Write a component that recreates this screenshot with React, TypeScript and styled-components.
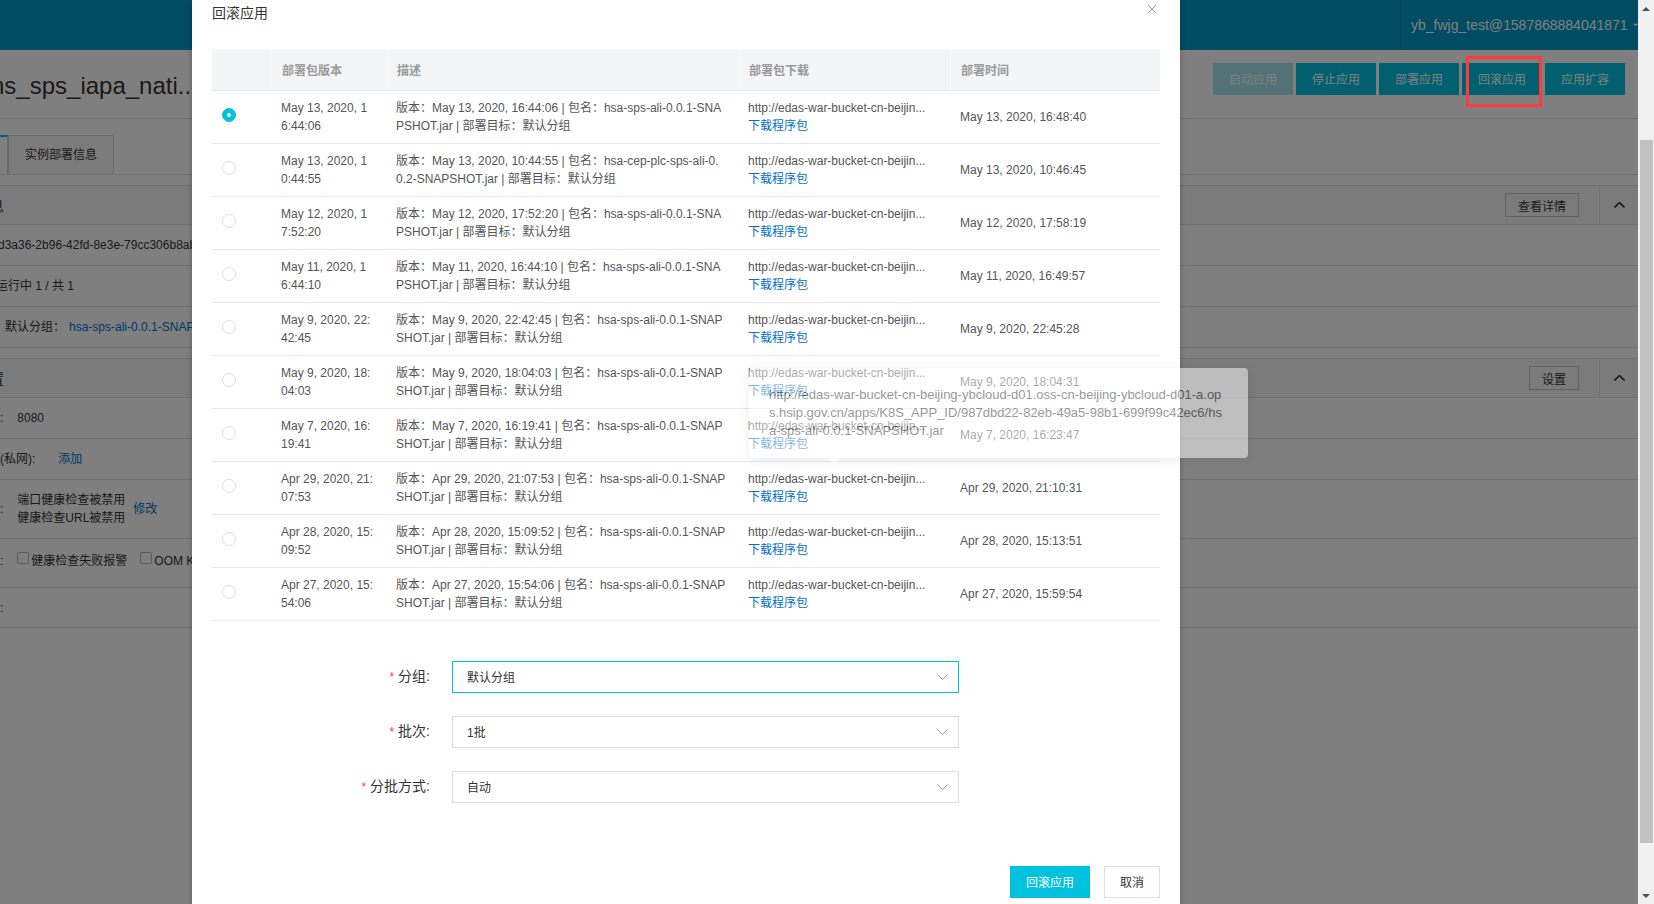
import styled, { createGlobalStyle } from 'styled-components';

const GlobalStyle = createGlobalStyle`
  * {
    box-sizing: border-box;
  }
  html,
  body {
    margin: 0;
    padding: 0;
  }
  body {
    font-family: 'Liberation Sans', Arial, 'Noto Sans CJK SC', sans-serif;
    font-size: 12px;
    color: #333;
    overflow: hidden;
  }
`;

const Screen = styled.div`
  display: flex;
  width: 1654px;
  height: 904px;
  overflow: hidden;
`;

const Viewport = styled.div`
  position: relative;
  flex: 1;
  height: 100%;
  overflow: hidden;
  background: #fff;
`;

/* ---------- page behind the dialog ---------- */

const TopBar = styled.header`
  height: 50px;
  background: #0098c6;
  display: flex;
  justify-content: flex-end;
`;

const Account = styled.div`
  width: 238px;
  border-left: 1px solid rgba(0, 0, 0, 0.14);
  display: flex;
  align-items: center;
  gap: 5px;
  padding-left: 10px;
  color: #fff;
  font-size: 14px;
  white-space: nowrap;
`;

const TitleBar = styled.div`
  height: 69px;
  display: flex;
  justify-content: space-between;
  align-items: flex-start;
  padding: 13px 13px 0 0;
  border-bottom: 1px solid #dedede;
`;

const AppName = styled.h1`
  margin: 9px 0 0 -9px;
  font-size: 24px;
  line-height: 28px;
  font-weight: normal;
  color: #333;
  white-space: nowrap;
`;

const ActionGroup = styled.div`
  display: flex;
  gap: 3px;
`;

const ActionButton = styled.button<{ $disabled?: boolean }>`
  width: 80px;
  height: 32px;
  border: none;
  padding: 0 0 2px;
  font: inherit;
  font-size: 12px;
  color: #fff;
  background: ${(p) => (p.$disabled ? '#a6e4ee' : '#00c1de')};
`;

const TabBar = styled.div`
  height: 56px;
  padding-top: 16px;
  display: flex;
  align-items: flex-end;
  border-bottom: 1px solid #dedede;
`;

const Tab = styled.div<{ $active?: boolean }>`
  height: 39px;
  line-height: 39px;
  text-align: center;
  font-size: 12px;
  color: #333;
  width: ${(p) => (p.$active ? '100px' : '106px')};
  margin-left: ${(p) => (p.$active ? '-92px' : '0')};
  background: ${(p) => (p.$active ? '#fff' : '#f6f6f6')};
  border: 1px solid #d6d6d6;
  border-bottom: none;
  border-top: ${(p) => (p.$active ? '2px solid #00c1de' : '1px solid #d6d6d6')};
`;

const Panel = styled.section`
  margin-top: 10px;
  border-top: 1px solid #e2e2e2;
`;

const PanelHead = styled.div`
  height: 39px;
  display: flex;
  align-items: center;
  background: #f6f6f6;
  border-bottom: 1px solid #e2e2e2;
`;

const PanelTitle = styled.span`
  margin-left: -10px;
  font-size: 14px;
  flex: 1;
  white-space: nowrap;
`;

const GhostButton = styled.button`
  height: 24px;
  padding: 0 12px;
  margin-right: 20px;
  border: 1px solid #c4c4c4;
  background: transparent;
  font: inherit;
  font-size: 12px;
  color: #333;
`;

const FoldCell = styled.div`
  width: 39px;
  height: 100%;
  display: flex;
  align-items: center;
  justify-content: center;
  border-left: 1px solid #e2e2e2;
`;

const PanelRow = styled.div<{ $h?: number; $lift?: number }>`
  height: ${(p) => p.$h ?? 41}px;
  padding-bottom: ${(p) => p.$lift ?? 0}px;
  display: flex;
  align-items: center;
  border-bottom: 1px solid #e2e2e2;
  line-height: 18px;
  white-space: nowrap;
`;

const Value = styled.span<{ $ml?: number }>`
  margin-left: ${(p) => p.$ml ?? 0}px;
  color: #333;
`;

const PageLink = styled.a<{ $ml?: number }>`
  margin-left: ${(p) => p.$ml ?? 0}px;
  color: #0070cc;
  text-decoration: none;
`;

const Stack = styled.div<{ $ml?: number }>`
  margin-left: ${(p) => p.$ml ?? 0}px;
  display: flex;
  flex-direction: column;
`;

const Checkbox = styled.span<{ $ml?: number }>`
  width: 12px;
  height: 12px;
  margin: -7px 0 0 ${(p) => p.$ml ?? 0}px;
  border: 1px solid #b8b8b8;
  border-radius: 2px;
  background: #fff;
`;

const Mask = styled.div`
  position: absolute;
  inset: 0;
  background: rgba(0, 0, 0, 0.5);
`;

const Highlight = styled.div`
  position: absolute;
  left: 1466px;
  top: 56px;
  width: 76px;
  height: 51px;
  border: 3px solid #ff3a3a;
`;

/* ---------- rollback dialog ---------- */

const Dialog = styled.div`
  position: absolute;
  left: 192px;
  top: 0;
  width: 988px;
  height: 930px;
  background: #fff;
  box-shadow: 0 0 6px rgba(0, 0, 0, 0.25);
`;

const DialogHead = styled.div`
  height: 49px;
  display: flex;
  justify-content: space-between;
  align-items: flex-start;
  padding: 3px 23px 0 20px;
`;

const DialogTitle = styled.h2`
  margin: 0;
  font-size: 14px;
  line-height: 20px;
  font-weight: normal;
  color: #333;
`;

const CloseButton = styled.button`
  border: none;
  background: none;
  padding: 0;
  margin-top: 1px;
  display: flex;
`;

const DialogBody = styled.div`
  padding: 0 20px;
`;

const Table = styled.table`
  width: 948px;
  table-layout: fixed;
  border-collapse: separate;
  border-spacing: 0;
  font-size: 12px;
  color: #555;
`;

const Th = styled.th`
  padding: 3px 10px 0;
  line-height: 38px;
  text-align: left;
  font-weight: bold;
  color: #999;
  background: #f4f5f7;
  border-bottom: 1px solid #e6e7eb;
  white-space: nowrap;

  & + & {
    border-left: 1px solid #fbfbfc;
  }
`;

const Td = styled.td`
  padding: 8px 10px;
  line-height: 18px;
  vertical-align: middle;
  border-bottom: 1px solid #e8e9ed;
  white-space: nowrap;
  overflow: hidden;
`;

const Line = styled.span`
  display: block;
`;

const Radio = styled.span<{ $checked?: boolean }>`
  position: relative;
  display: block;
  width: 14px;
  height: 14px;
  margin-top: -4px;
  border-radius: 50%;
  border: 1px solid ${(p) => (p.$checked ? '#00c1de' : '#dcdee3')};
  background: ${(p) => (p.$checked ? '#00c1de' : '#fff')};

  &::after {
    content: '';
    display: ${(p) => (p.$checked ? 'block' : 'none')};
    position: absolute;
    left: 4px;
    top: 4px;
    width: 4px;
    height: 4px;
    border-radius: 50%;
    background: #fff;
  }
`;

const Form = styled.div`
  margin-top: 40px;
  display: flex;
  flex-direction: column;
  gap: 23px;
`;

const Field = styled.div`
  display: grid;
  grid-template-columns: 218px 507px;
  column-gap: 22px;
  align-items: center;
`;

const FieldLabel = styled.label`
  text-align: right;
  font-size: 14px;
  line-height: 18px;
  padding-bottom: 1px;
  color: #333;
  white-space: nowrap;
`;

const Required = styled.span`
  margin-right: 4px;
  font-size: 12px;
  color: #f54743;
`;

const Select = styled.div<{ $focused?: boolean }>`
  height: 32px;
  display: flex;
  align-items: center;
  justify-content: space-between;
  padding: 0 10px 1px 14px;
  border: 1px solid ${(p) => (p.$focused ? '#00c1de' : '#dcdee3')};
  font-size: 12px;
  color: #333;
`;

const Footer = styled.div`
  margin-top: 63px;
  display: flex;
  justify-content: flex-end;
  gap: 14px;
`;

const Button = styled.button<{ $primary?: boolean }>`
  height: 32px;
  width: ${(p) => (p.$primary ? '80px' : '56px')};
  padding: 0 0 1px;
  font: inherit;
  font-size: 12px;
  color: ${(p) => (p.$primary ? '#fff' : '#333')};
  background: ${(p) => (p.$primary ? '#00c1de' : '#fff')};
  border: 1px solid ${(p) => (p.$primary ? '#00c1de' : '#dcdee3')};
`;

const Tooltip = styled.div`
  position: absolute;
  left: 749px;
  top: 368px;
  width: 499px;
  padding: 18px 20px;
  background: #fff;
  color: #333;
  font-size: 13px;
  line-height: 18px;
  white-space: nowrap;
  border-radius: 4px;
  box-shadow: 0 2px 8px rgba(0, 0, 0, 0.15);
  opacity: 0.5;

  &::after {
    content: '';
    position: absolute;
    left: 82px;
    bottom: -4px;
    width: 8px;
    height: 8px;
    background: #fff;
    transform: rotate(45deg);
  }
`;

/* ---------- scrollbar ---------- */

const Scrollbar = styled.div`
  width: 16px;
  height: 100%;
  background: #f1f1f1;
  display: flex;
  flex-direction: column;
`;

const ScrollArrow = styled.div`
  height: 17px;
  display: flex;
  align-items: center;
  justify-content: center;
`;

const ScrollTrack = styled.div`
  flex: 1;
  padding-top: 123px;
`;

const ScrollThumb = styled.div`
  height: 703px;
  margin: 0 1px 0 2px;
  background: #c1c1c1;
`;

const Chevron = ({ up, color = '#999' }: { up?: boolean; color?: string }) => (
  <svg width="11" height="6" viewBox="0 0 11 6" fill="none">
    <polyline
      points={up ? '0.5,5.5 5.5,0.5 10.5,5.5' : '0.5,0.5 5.5,5.5 10.5,0.5'}
      stroke={color}
      strokeWidth={up ? 1.6 : 1}
    />
  </svg>
);

const Triangle = ({ down, color }: { down?: boolean; color: string }) => (
  <svg width="8" height="4" viewBox="0 0 8 4">
    <polygon points={down ? '0,0 8,0 4,4' : '0,4 8,4 4,0'} fill={color} />
  </svg>
);

type Version = {
  stamp: string;
  dateCut: number;
  pkg: string;
  pkgCut: number;
  time: string;
  checked?: boolean;
};

const SPS = 'hsa-sps-ali-0.0.1-SNAPSHOT.jar';

const versions: Version[] = [
  { stamp: 'May 13, 2020, 16:44:06', dateCut: 15, pkg: SPS, pkgCut: 21, time: 'May 13, 2020, 16:48:40', checked: true },
  { stamp: 'May 13, 2020, 10:44:55', dateCut: 15, pkg: 'hsa-cep-plc-sps-ali-0.0.2-SNAPSHOT.jar', pkgCut: 22, time: 'May 13, 2020, 10:46:45' },
  { stamp: 'May 12, 2020, 17:52:20', dateCut: 15, pkg: SPS, pkgCut: 21, time: 'May 12, 2020, 17:58:19' },
  { stamp: 'May 11, 2020, 16:44:10', dateCut: 15, pkg: SPS, pkgCut: 21, time: 'May 11, 2020, 16:49:57' },
  { stamp: 'May 9, 2020, 22:42:45', dateCut: 16, pkg: SPS, pkgCut: 22, time: 'May 9, 2020, 22:45:28' },
  { stamp: 'May 9, 2020, 18:04:03', dateCut: 16, pkg: SPS, pkgCut: 22, time: 'May 9, 2020, 18:04:31' },
  { stamp: 'May 7, 2020, 16:19:41', dateCut: 16, pkg: SPS, pkgCut: 22, time: 'May 7, 2020, 16:23:47' },
  { stamp: 'Apr 29, 2020, 21:07:53', dateCut: 17, pkg: SPS, pkgCut: 22, time: 'Apr 29, 2020, 21:10:31' },
  { stamp: 'Apr 28, 2020, 15:09:52', dateCut: 17, pkg: SPS, pkgCut: 22, time: 'Apr 28, 2020, 15:13:51' },
  { stamp: 'Apr 27, 2020, 15:54:06', dateCut: 17, pkg: SPS, pkgCut: 22, time: 'Apr 27, 2020, 15:59:54' },
];

const fields = [
  { label: '分组:', value: '默认分组', focused: true },
  { label: '批次:', value: '1批' },
  { label: '分批方式:', value: '自动' },
];

const App = () => {
  return (
    <>
      <GlobalStyle />
      <Screen>
        <Viewport>
          <TopBar>
            <Account>
              yb_fwjg_test@1587868884041871
              <Triangle down color="#fff" />
            </Account>
          </TopBar>

          <TitleBar>
            <AppName>ns_sps_iapa_nati...</AppName>
            <ActionGroup>
              <ActionButton $disabled>启动应用</ActionButton>
              <ActionButton>停止应用</ActionButton>
              <ActionButton>部署应用</ActionButton>
              <ActionButton>回滚应用</ActionButton>
              <ActionButton>应用扩容</ActionButton>
            </ActionGroup>
          </TitleBar>

          <TabBar>
            <Tab $active>基本信息</Tab>
            <Tab>实例部署信息</Tab>
          </TabBar>

          <Panel>
            <PanelHead>
              <PanelTitle>息</PanelTitle>
              <GhostButton>查看详情</GhostButton>
              <FoldCell>
                <Chevron up color="#333" />
              </FoldCell>
            </PanelHead>
            <PanelRow>
              <Value $ml={-2}>d3a36-2b96-42fd-8e3e-79cc306b8ab7</Value>
            </PanelRow>
            <PanelRow>
              <Value $ml={-4}>运行中 1 / 共 1</Value>
            </PanelRow>
            <PanelRow>
              <Value $ml={5}>默认分组：</Value>
              <PageLink $ml={4}>hsa-sps-ali-0.0.1-SNAPSHOT.jar</PageLink>
            </PanelRow>
          </Panel>

          <Panel>
            <PanelHead>
              <PanelTitle>置</PanelTitle>
              <GhostButton>设置</GhostButton>
              <FoldCell>
                <Chevron up color="#333" />
              </FoldCell>
            </PanelHead>
            <PanelRow>
              <Value>:</Value>
              <Value $ml={14}>8080</Value>
            </PanelRow>
            <PanelRow>
              <Value>(私网):</Value>
              <PageLink $ml={23}>添加</PageLink>
            </PanelRow>
            <PanelRow $h={59}>
              <Value>:</Value>
              <Stack $ml={14}>
                <span>端口健康检查被禁用</span>
                <span>健康检查URL被禁用</span>
              </Stack>
              <PageLink $ml={8}>修改</PageLink>
            </PanelRow>
            <PanelRow $h={49} $lift={4}>
              <Value>:</Value>
              <Checkbox $ml={14} />
              <Value $ml={2}>健康检查失败报警</Value>
              <Checkbox $ml={13} />
              <Value $ml={2}>OOM Killer 报警</Value>
            </PanelRow>
            <PanelRow $h={40}>
              <Value>:</Value>
            </PanelRow>
          </Panel>

          <Mask />

          <Dialog>
            <DialogHead>
              <DialogTitle>回滚应用</DialogTitle>
              <CloseButton aria-label="关闭">
                <svg width="10" height="10" viewBox="0 0 10 10">
                  <path d="M1 1 L9 9 M9 1 L1 9" stroke="#999" strokeWidth="1" />
                </svg>
              </CloseButton>
            </DialogHead>

            <DialogBody>
              <Table>
                <colgroup>
                  <col style={{ width: 59 }} />
                  <col style={{ width: 115 }} />
                  <col style={{ width: 352 }} />
                  <col style={{ width: 212 }} />
                  <col style={{ width: 210 }} />
                </colgroup>
                <thead>
                  <tr>
                    <Th />
                    <Th>部署包版本</Th>
                    <Th>描述</Th>
                    <Th>部署包下载</Th>
                    <Th>部署时间</Th>
                  </tr>
                </thead>
                <tbody>
                  {versions.map((v) => (
                    <tr key={v.stamp}>
                      <Td>
                        <Radio $checked={v.checked} />
                      </Td>
                      <Td>
                        <Line>{v.stamp.slice(0, v.dateCut)}</Line>
                        <Line>{v.stamp.slice(v.dateCut)}</Line>
                      </Td>
                      <Td>
                        <Line>
                          版本：{v.stamp} | 包名：{v.pkg.slice(0, v.pkgCut)}
                        </Line>
                        <Line>{v.pkg.slice(v.pkgCut)} | 部署目标：默认分组</Line>
                      </Td>
                      <Td>
                        <Line>http://edas-war-bucket-cn-beijin...</Line>
                        <Line>
                          <PageLink>下载程序包</PageLink>
                        </Line>
                      </Td>
                      <Td>{v.time}</Td>
                    </tr>
                  ))}
                </tbody>
              </Table>

              <Form>
                {fields.map((f) => (
                  <Field key={f.label}>
                    <FieldLabel>
                      <Required>*</Required>
                      {f.label}
                    </FieldLabel>
                    <Select $focused={f.focused}>
                      {f.value}
                      <Chevron />
                    </Select>
                  </Field>
                ))}
              </Form>

              <Footer>
                <Button $primary>回滚应用</Button>
                <Button>取消</Button>
              </Footer>
            </DialogBody>
          </Dialog>

          <Tooltip>
            <Line>http://edas-war-bucket-cn-beijing-ybcloud-d01.oss-cn-beijing-ybcloud-d01-a.op</Line>
            <Line>s.hsip.gov.cn/apps/K8S_APP_ID/987dbd22-82eb-49a5-98b1-699f99c42ec6/hs</Line>
            <Line>a-sps-ali-0.0.1-SNAPSHOT.jar</Line>
          </Tooltip>

          <Highlight />
        </Viewport>

        <Scrollbar>
          <ScrollArrow>
            <Triangle color="#505050" />
          </ScrollArrow>
          <ScrollTrack>
            <ScrollThumb />
          </ScrollTrack>
          <ScrollArrow>
            <Triangle down color="#505050" />
          </ScrollArrow>
        </Scrollbar>
      </Screen>
    </>
  );
};

export default App;
